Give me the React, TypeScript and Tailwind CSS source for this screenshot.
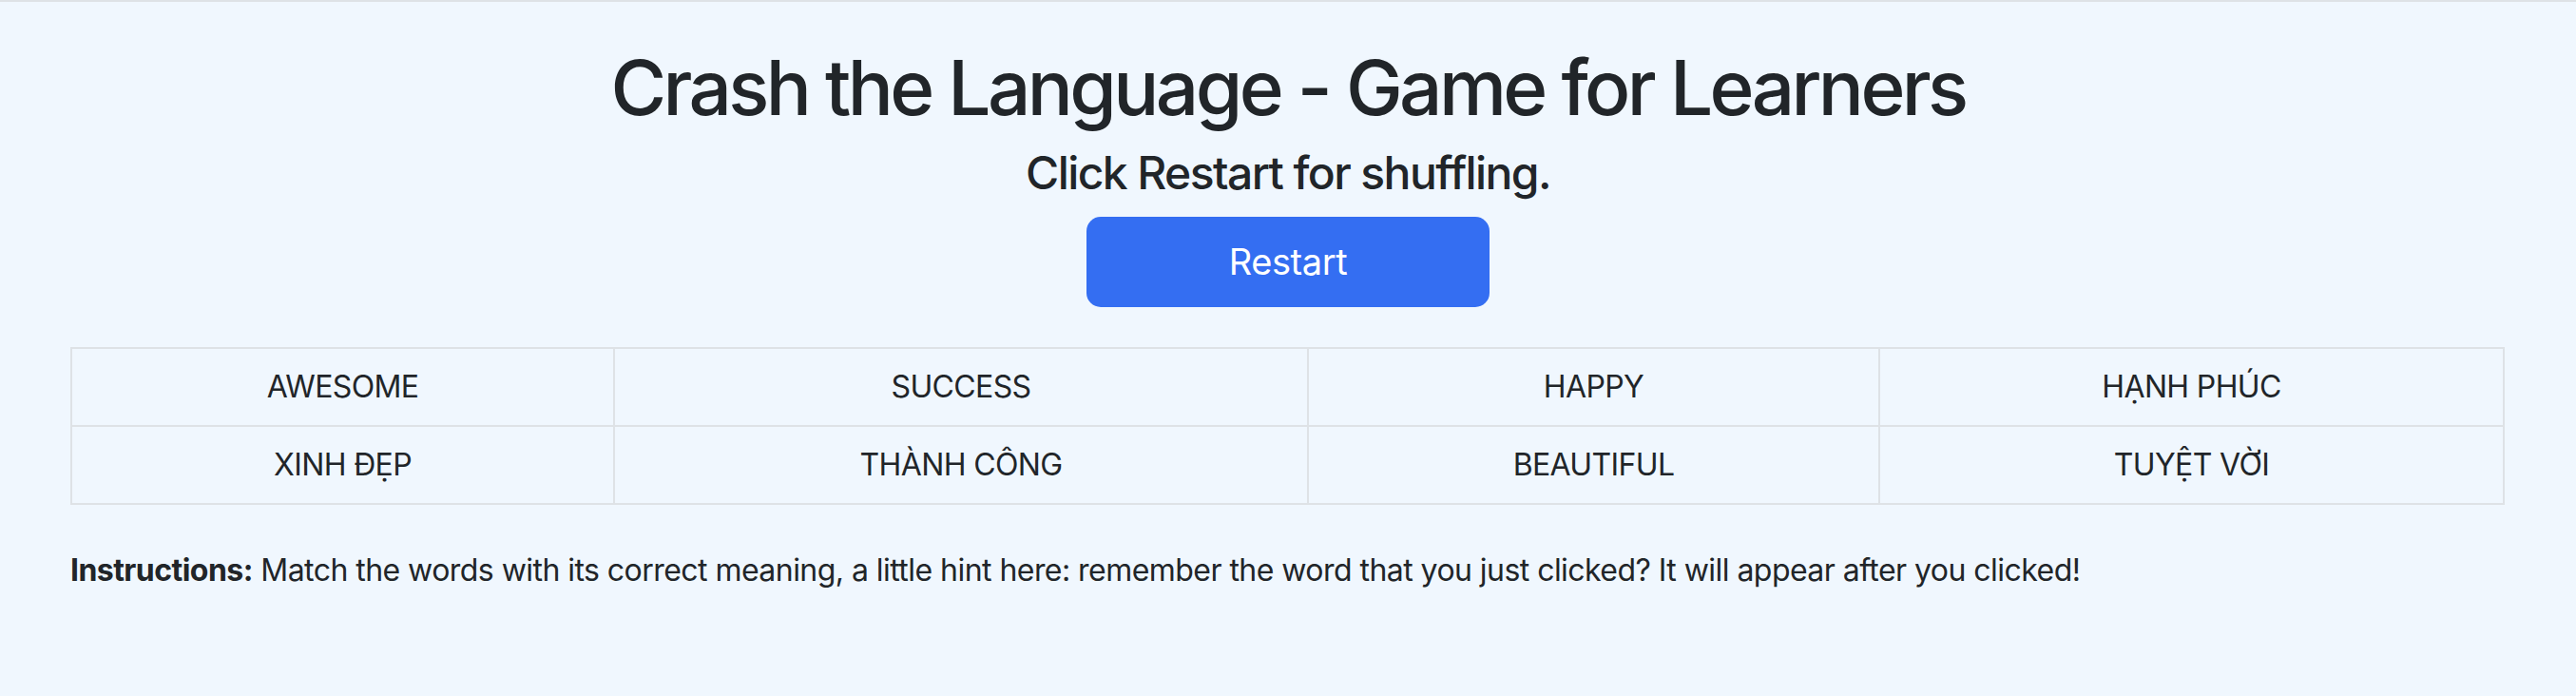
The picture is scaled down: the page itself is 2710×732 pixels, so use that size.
import React from 'react';

const rows = [
  ['AWESOME', 'SUCCESS', 'HAPPY', 'HẠNH PHÚC'],
  ['XINH ĐẸP', 'THÀNH CÔNG', 'BEAUTIFUL', 'TUYỆT VỜI'],
];

const colWidths = ['w-[571px]', 'w-[730px]', 'w-[601px]', 'w-[657px]'];

export default function App() {
  return (
    <div className="min-h-[732px] bg-[#f0f7fe] border-t-2 border-[#dee2e6] font-['Inter','Liberation_Sans',sans-serif] text-[#212529]">
      <div className="px-[74px] pt-[42px] pb-10">
        <h1 className="text-center text-[80px] leading-[1.2] font-medium tracking-[-0.045em]">
          Crash the Language - Game for Learners
        </h1>
        <h4 className="mt-[13px] text-center text-[48px] leading-[1.2] font-medium tracking-[-0.033em]">
          Click Restart for shuffling.
        </h4>
        <div className="mt-[17px] flex justify-center">
          <button className="w-[424px] h-[95px] rounded-[15px] bg-[#346ef2] text-white text-[38px] tracking-[-0.01em]">
            Restart
          </button>
        </div>

        <table className="mt-[42px] w-[2559px] border-collapse table-fixed">
          <tbody>
            {rows.map((row, r) => (
              <tr key={r}>
                {row.map((word, c) => (
                  <td
                    key={c}
                    className={`${colWidths[c]} h-[82px] border-2 border-[#dee2e6] text-center align-middle text-[32px] tracking-[-0.02em] cursor-pointer`}
                  >
                    {word}
                  </td>
                ))}
              </tr>
            ))}
          </tbody>
        </table>

        <p className="mt-[45px] text-[32px] leading-[1.5] tracking-[-0.017em]">
          <strong className="font-bold">Instructions:</strong> Match the words with its correct meaning, a little hint here: remember the word that you just clicked? It will appear after you clicked!
        </p>
      </div>
    </div>
  );
}
